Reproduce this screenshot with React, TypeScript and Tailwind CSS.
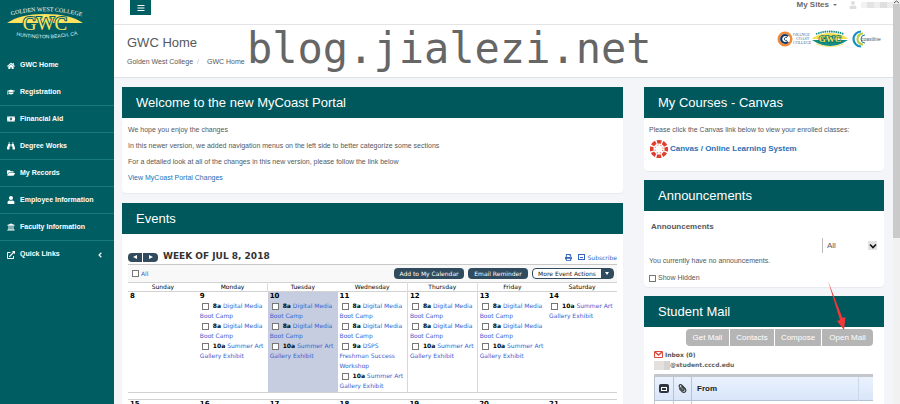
import React from "react";
import {
  FaHome,
  FaGraduationCap,
  FaMoneyBillAlt,
  FaBinoculars,
  FaFolderOpen,
  FaUser,
  FaUniversity,
  FaExternalLinkAlt,
  FaBars,
  FaAngleLeft,
  FaPaperclip,
  FaPrint,
} from "react-icons/fa";

const nav = [
  { label: "GWC Home", icon: FaHome },
  { label: "Registration", icon: FaGraduationCap, line: true },
  { label: "Financial Aid", icon: FaMoneyBillAlt, line: true },
  { label: "Degree Works", icon: FaBinoculars, line: true },
  { label: "My Records", icon: FaFolderOpen, line: true },
  { label: "Employee Information", icon: FaUser, line: true },
  { label: "Faculty Information", icon: FaUniversity, line: true },
  { label: "Quick Links", icon: FaExternalLinkAlt, more: true },
];

type Entry = { time: string; title: string };
const camp: Entry = { time: "8a", title: "Digital Media Boot Camp" };
const art: Entry = { time: "10a", title: "Summer Art Gallery Exhibit" };
const dsps: Entry = { time: "9a", title: "DSPS Freshman Success Workshop" };

const week: { name: string; date: number; entries: Entry[] }[] = [
  { name: "Sunday", date: 8, entries: [] },
  { name: "Monday", date: 9, entries: [camp, camp, art] },
  { name: "Tuesday", date: 10, entries: [camp, camp, art] },
  { name: "Wednesday", date: 11, entries: [camp, camp, dsps, art] },
  { name: "Thursday", date: 12, entries: [camp, camp, art] },
  { name: "Friday", date: 13, entries: [camp, camp, art] },
  { name: "Saturday", date: 14, entries: [art] },
];

function GwcLogo() {
  return (
    <svg viewBox="0 0 80 36" className="h-9 w-20 overflow-visible" role="img" aria-label="Golden West College">
      <defs>
        <path id="logo-top" d="M3 11 Q40 1 78 12" />
        <path id="logo-bottom" d="M8 30 Q40 37 74 29" />
      </defs>
      <path d="M1 18 Q14 9 39 9 Q64 9 77 18 Z" fill="#fbe25f" />
      <text fontSize="6" fill="#fff" fontFamily="Liberation Serif, serif">
        <textPath href="#logo-top" startOffset="50%" textAnchor="middle">GOLDEN WEST COLLEGE</textPath>
      </text>
      <text
        x="39" y="25" textAnchor="middle" fontSize="19" fill="#fbe25f"
        stroke="#005e62" strokeWidth="2" paintOrder="stroke" fontFamily="Liberation Serif, serif"
      >
        GWC
      </text>
      <text fontSize="5" fill="#e8f4f4" fontFamily="Liberation Sans, sans-serif">
        <textPath href="#logo-bottom" startOffset="50%" textAnchor="middle">HUNTINGTON BEACH, CA</textPath>
      </text>
    </svg>
  );
}

function CollegeLogos() {
  return (
    <svg viewBox="0 0 108 18" className="h-[18px] w-[108px]" role="img" aria-label="Orange Coast College, Golden West College, Coastline">
      <circle cx="8" cy="9" r="6.300" fill="#fff" stroke="#f08a35" strokeWidth="2.400" />
      <path d="M11 6.200A4 4 0 1 0 11 11.800" fill="none" stroke="#14396b" strokeWidth="2.200" />
      <path d="M10 7.800A1.600 1.600 0 1 0 10 10.200" fill="none" stroke="#14396b" strokeWidth=".8" />
      <g fontSize="4" fill="#47658c" fontFamily="Liberation Serif, serif">
        <text x="16" y="6">ORANGE</text>
        <text x="19" y="10">COAST</text>
        <text x="16" y="14">COLLEGE</text>
      </g>
      <path d="M37 7Q53 -1 69 7L71 9H35Z" fill="#f4e04a" />
      <path d="M35 10H71Q53 22 35 10Z" fill="#168b82" />
      <path d="M39 14Q53 19 67 14" fill="none" stroke="#f4e04a" strokeWidth=".8" />
      <path d="M39 4Q53 -1 67 4" fill="none" stroke="#168b82" strokeWidth="1.800" strokeDasharray="1.500 .7" />
      <text x="53" y="12" textAnchor="middle" fontSize="9" fontWeight="bold" fill="#f4e55a" stroke="#087570" strokeWidth="1.500" paintOrder="stroke" fontFamily="Liberation Serif, serif">GWC</text>
      <path d="M84 1.500A7.500 7.500 0 0 0 84 16.500" fill="none" stroke="#168fc4" strokeWidth="2.200" />
      <path d="M86 3.500A5.500 5.500 0 0 0 86 14.500" fill="none" stroke="#b5cc43" strokeWidth="2.200" />
      <path d="M88 5A4 4 0 0 0 88 13" fill="none" stroke="#207a9c" strokeWidth="1" />
      <text x="84" y="11" fontSize="5" fill="#555" fontFamily="Liberation Sans, sans-serif">coastline</text>
    </svg>
  );
}

function CanvasMark() {
  return (
    <svg viewBox="0 0 20 20" className="h-5 w-5 shrink-0" aria-hidden="true">
      <circle cx="10" cy="10" r="7.300" fill="none" stroke="#e23c2c" strokeWidth="3.600" strokeDasharray="4.400 1.333" strokeDashoffset="2.200" />
      <circle cx="10" cy="10" r="4" fill="none" stroke="#e23c2c" strokeWidth="1" strokeDasharray="1 2.142" strokeDashoffset="-1.070" />
    </svg>
  );
}

function Card({ title, children, className = "" }: { title: string; children: React.ReactNode; className?: string }) {
  return (
    <section className={`rounded-b-sm bg-white shadow-[0_1px_1px_#e6e9ee] ${className}`}>
      <h2 className="flex h-[31px] items-center bg-[#00575c] px-[14px] text-[13px] text-white">{title}</h2>
      {children}
    </section>
  );
}

function Tick({ label }: { label: string }) {
  return (
    <input
      type="checkbox"
      aria-label={label}
      className="h-[7px] w-[7px] shrink-0 appearance-none border border-[#777] bg-white"
    />
  );
}

function Calendar() {
  return (
    <table className="w-full table-fixed border-collapse font-['DejaVu_Sans',sans-serif] text-[7px] text-black">
      <thead>
        <tr className="h-[9px] border-y border-[#d2d2d2]">
          {week.map((d) => (
            <th key={d.name} className={`p-0 text-center text-[6px] leading-[8px] font-medium ${d.date === 10 || d.date === 12 || d.date === 13 ? "border-l border-[#dcdcdc]" : ""}`}>
              {d.name}
            </th>
          ))}
        </tr>
      </thead>
      <tbody>
        <tr className="h-[101px] border-b border-[#d2d2d2] align-top">
          {week.map((d) => (
            <td
              key={d.date}
              className={`py-0 pr-0 pl-[2px] ${d.date === 10 ? "bg-[#c7cde0]" : ""} ${d.date === 12 || d.date === 13 ? "border-l border-[#d8d8d8]" : ""}`}
            >
              <div className="leading-[9px] font-bold">{d.date}</div>
              {d.entries.map((e, i) => (
                <div key={i} className="text-[6px] leading-[10px]">
                  <span className="mr-1 ml-0.5 inline-flex align-middle">
                    <Tick label={`${e.time} ${e.title}`} />
                  </span>
                  <b>{e.time}</b>{" "}
                  <a href="#event" className="text-[#3961d0]">{e.title}</a>
                </div>
              ))}
            </td>
          ))}
        </tr>
        <tr className="h-[7px] border-b border-[#d2d2d2]">
          <td colSpan={7} className="p-0" />
        </tr>
        <tr>
          {week.map((d) => (
            <td key={d.date} className="py-0 pr-0 pl-[2px] leading-[9px] font-bold">{d.date + 7}</td>
          ))}
        </tr>
      </tbody>
    </table>
  );
}

export default function App() {
  return (
    <div className="relative flex h-screen overflow-hidden bg-[#f3f5f9] font-['Liberation_Sans',Arial,sans-serif] text-[7px] text-[#55585c]">
      <aside className="w-[114px] shrink-0 bg-[#005e62] text-white">
        <div className="h-[52px] pt-[5px] pl-1.5">
          <GwcLogo />
        </div>
        <nav>
          {nav.map(({ label, icon: Icon, line, more }) => (
            <a
              key={label}
              href="#nav"
              className={`flex h-[27px] items-center gap-[5px] pr-2.5 pl-[7px] text-[7px] font-bold ${line ? "border-b border-[#177a7d]" : ""}`}
            >
              <Icon className="h-2 w-2 shrink-0" />
              <span className="whitespace-nowrap">{label}</span>
              {more && <FaAngleLeft className="ml-auto h-2 w-2" />}
            </a>
          ))}
        </nav>
      </aside>

      <div className="min-w-0 flex-1">
        <header className="flex h-[25px] items-start justify-between border-b border-[#e2e4e7] bg-white pl-4">
          <button aria-label="Toggle menu" className="flex h-[15px] w-[21px] items-center justify-center bg-[#005e62] text-white">
            <FaBars className="h-2 w-2" />
          </button>
          <div className="flex h-[10px] items-center">
            <button className="flex items-center gap-1 text-[8px] font-bold text-[#67696c]">
              My Sites
              <span className="border-x-2 border-t-2 border-x-transparent border-t-[#777]" />
            </button>
            <FaUser className="ml-3 h-2 w-2 text-[#dedede]" />
            <div className="ml-1 flex h-1.5 w-8 opacity-70">
              <span className="flex-1 bg-[#ededed]" />
              <span className="flex-1 bg-[#d8d8d8]" />
              <span className="flex-1 bg-[#e8e8e8]" />
              <span className="flex-1 bg-[#d2d2d2]" />
              <span className="flex-1 bg-[#e4e4e4]" />
            </div>
          </div>
        </header>

        <div className="relative flex h-[53px] items-start justify-between border-b border-[#dfe3e8] bg-white pr-2 pl-[13px]">
          <div className="pt-[9px]">
            <h1 className="text-[13px] leading-[18px]">GWC Home</h1>
            <div className="mt-1 flex gap-1 leading-[11px]">
              <a href="#college">Golden West College</a>
              <span className="mr-1 text-[#bbb]">/</span>
              <span>GWC Home</span>
            </div>
          </div>
          <div className="pt-[5px]">
            <CollegeLogos />
          </div>
          <div className="pointer-events-none absolute top-0 left-[133px] font-['DejaVu_Sans_Mono',monospace] text-[42px] leading-[48px] text-[#666]">
            blog.jialezi.net
          </div>
        </div>

        <main className="flex items-start gap-[21px] pt-[9px] pr-[9px] pl-2">
          <div className="min-w-0 flex-1">
            <Card title="Welcome to the new MyCoast Portal" className="mb-[10px]">
              <div className="flex h-[75px] flex-col px-1.5 pt-1 leading-[16px]">
                <p>We hope you enjoy the changes</p>
                <p>In this newer version, we added navigation menus on the left side to better categorize some sections</p>
                <p>For a detailed look at all of the changes in this new version, please follow the link below</p>
                <a href="#changes" className="text-[#2070b8]">View MyCoast Portal Changes</a>
              </div>
            </Card>

            <Card title="Events">
              <div className="px-1.5 pt-4 font-['DejaVu_Sans',sans-serif] text-[6px]">
                <div className="flex h-[15px] items-center border-b border-[#c8c8c8]">
                  <button aria-label="Previous week" className="flex h-[9px] w-[14px] items-center justify-center rounded-l-sm bg-[#304b5e] text-white">
                    <span className="border-y-2 border-r-4 border-y-transparent border-r-white" />
                  </button>
                  <button aria-label="Next week" className="ml-px flex h-[9px] w-[15px] items-center justify-center rounded-r-sm bg-[#304b5e] text-white">
                    <span className="border-y-2 border-l-4 border-y-transparent border-l-white" />
                  </button>
                  <h3 className="ml-[5px] text-[9px] font-bold text-[#333]">WEEK OF JUL 8, 2018</h3>
                  <FaPrint className="ml-auto h-[7px] w-[7px] text-[#3464c0]" />
                  <a href="#subscribe" className="ml-[6px] flex items-center gap-[3px] text-[#3464c0]">
                    <span className="flex h-1.5 w-[7px] items-center justify-center border border-[#3464c0]">
                      <span className="h-px w-[3px] bg-[#3464c0]" />
                    </span>
                    Subscribe
                  </a>
                </div>
                <div className="flex h-[17px] items-center gap-[4px] bg-[#f8f8f8] pr-[3px] pl-1">
                  <label className="mr-auto flex items-center gap-0.5 text-[#3464c0]">
                    <Tick label="All events" />
                    All
                  </label>
                  <button className="h-[11px] w-[70px] rounded-sm bg-[#304b5e] leading-[11px] whitespace-nowrap text-white">Add to My Calendar</button>
                  <button className="h-[11px] w-[60px] rounded-sm bg-[#304b5e] leading-[11px] whitespace-nowrap text-white">Email Reminder</button>
                  <button className="flex h-[11px] w-[82px] items-center rounded-sm border border-[#304b5e] bg-white leading-[9px] text-[#222]">
                    <span className="flex-1 whitespace-nowrap">More Event Actions</span>
                    <span className="flex h-full w-3 items-center justify-center bg-[#304b5e]">
                      <span className="border-x-2 border-t-[3px] border-x-transparent border-t-white" />
                    </span>
                  </button>
                </div>
                <Calendar />
              </div>
            </Card>
          </div>

          <div className="w-[240px] shrink-0">
            <Card title="My Courses - Canvas" className="mb-[9px]">
              <div className="h-[53px] px-[5px] pt-1 leading-[16px]">
                <p>Please click the Canvas link below to view your enrolled classes:</p>
                <a href="#canvas" className="mt-px flex items-center gap-px text-[8px] font-bold text-[#2b70b5]">
                  <CanvasMark />
                  Canvas / Online Learning System
                </a>
              </div>
            </Card>

            <Card title="Announcements" className="mb-[9px]">
              <div className="h-[76px] px-[5px] pt-2.5">
                <h3 className="pl-0.5 text-[8px] leading-[12px] font-bold">Announcements</h3>
                <div className="mt-[5px] flex justify-end pr-0.5">
                  <div className="relative">
                    <select aria-label="Announcement filter" className="h-[15px] w-[55px] appearance-none border-l border-[#bbb] bg-white pl-1 text-[8px]">
                      <option>All</option>
                    </select>
                    <span className="pointer-events-none absolute top-[3px] right-0 flex h-[9px] w-[9px] items-center justify-center bg-[#e2e2e2]">
                      <svg viewBox="0 0 8 8" className="h-2 w-2"><path d="M1 2.500L4 5.500L7 2.500" fill="none" stroke="#111" strokeWidth="1.600" /></svg>
                    </span>
                  </div>
                </div>
                <p className="leading-[16px]">You currently have no announcements.</p>
                <label className="mt-[3px] flex items-center gap-0.5 leading-[12px]">
                  <Tick label="Show Hidden" />
                  Show Hidden
                </label>
              </div>
            </Card>

            <Card title="Student Mail">
              <div className="pt-0.5 pr-[11px] pl-[10px]">
                <div className="ml-8 flex h-[17px] gap-px text-[8px] text-white">
                  <button className="w-[43px] rounded-l-sm bg-[#b5b5b5]">Get Mail</button>
                  <button className="w-11 bg-[#b5b5b5]">Contacts</button>
                  <button className="w-[46px] bg-[#b5b5b5]">Compose</button>
                  <button className="flex-1 rounded-r-sm bg-[#b5b5b5]">Open Mail</button>
                </div>
                <div className="mt-[3px] flex items-center gap-0.5 font-['DejaVu_Sans',sans-serif] text-[6px] leading-[11px] font-bold text-[#555]">
                  <svg viewBox="0 0 9 7" className="h-[7px] w-[9px]">
                    <path d="M.5 .5H8.500V6.500H.5Z" fill="#fff" stroke="#e0483d" />
                    <path d="M1 1L4.500 4L8 1" fill="none" stroke="#e0483d" strokeWidth="1.500" />
                  </svg>
                  Inbox (0)
                </div>
                <div className="flex items-center font-['DejaVu_Sans',sans-serif] text-[6px] leading-[10px] font-bold text-[#666]">
                  <span className="h-[9px] w-2.5 bg-[#e4e0de]" />
                  <span className="h-[9px] w-1.5 bg-[#d6d4d2]" />
                  @student.cccd.edu
                </div>
                <table className="mt-1 w-full border-collapse border-t-[3px] border-t-[#c3c6ca] text-[8px]">
                  <thead>
                    <tr className="h-[25px] border-b border-[#b4c2d6] bg-linear-to-b from-[#eaf2fd] to-[#d9e6f9]">
                      <th className="w-[19px] border-r border-l border-[#b8c3d0] p-0">
                        <span className="mx-auto flex h-[9px] w-[10px] items-center justify-center rounded-xs bg-[#2e3540]">
                          <span className="h-1 w-1.5 border border-white" />
                        </span>
                      </th>
                      <th className="w-[18px] border-r border-[#b8c3d0] p-0"><FaPaperclip className="mx-auto h-[9px] w-[9px] -scale-x-100 text-[#333]" /></th>
                      <th className="px-[5px] py-0 text-left text-[#222]">From</th>
                      <th className="w-[15px] border-l border-[#cdd9e9] p-0" />
                    </tr>
                  </thead>
                  <tbody>
                    <tr className="h-[30px]">
                      <td className="border-x border-[#c4c9d0]" />
                      <td className="border-r border-[#c4c9d0]" />
                      <td />
                      <td />
                    </tr>
                  </tbody>
                </table>
              </div>
            </Card>
          </div>
        </main>
      </div>

      <div className="flex w-[7px] shrink-0 flex-col bg-[#f1f1f1]">
        <svg viewBox="0 0 7 4" className="h-1 w-[7px]"><path d="M1 3L3.500 1L6 3" fill="none" stroke="#555" /></svg>
        <span className="h-[234px] bg-[#cacaca]" />
      </div>

      <svg viewBox="0 0 20 50" className="pointer-events-none absolute top-[281px] right-[52px] h-[50px] w-5" aria-hidden="true">
        <path d="M0 0L14.500 37L17.500 36L16 49L9 40L12 39Z" fill="#f33636" />
      </svg>
    </div>
  );
}
